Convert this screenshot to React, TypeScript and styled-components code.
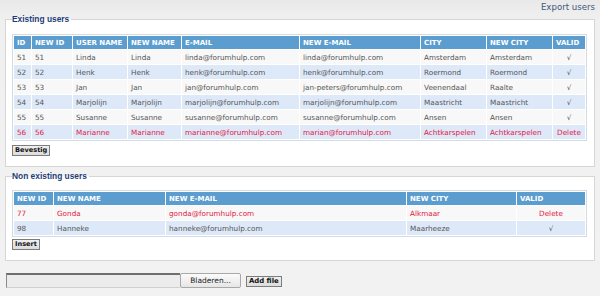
import React, { FC } from 'react';
import styled, { createGlobalStyle, css } from 'styled-components';

const GlobalStyle = createGlobalStyle`
  html, body {
    margin: 0;
    padding: 0;
    background: #f0f0f0;
    font-family: 'DejaVu Sans', Verdana, sans-serif;
  }
`;

interface Column {
  label: string;
  width: number;
  center?: boolean;
}

interface UserRow {
  cells: string[];
  danger?: boolean;
}

const existingColumns: Column[] = [
  { label: 'ID', width: 17 },
  { label: 'NEW ID', width: 40 },
  { label: 'USER NAME', width: 54 },
  { label: 'NEW NAME', width: 53 },
  { label: 'E-MAIL', width: 117 },
  { label: 'NEW E-MAIL', width: 120 },
  { label: 'CITY', width: 65 },
  { label: 'NEW CITY', width: 65 },
  { label: 'VALID', width: 32, center: true },
];

const existingRows: UserRow[] = [
  { cells: ['51', '51', 'Linda', 'Linda', 'linda@forumhulp.com', 'linda@forumhulp.com', 'Amsterdam', 'Amsterdam', '√'] },
  { cells: ['52', '52', 'Henk', 'Henk', 'henk@forumhulp.com', 'henk@forumhulp.com', 'Roermond', 'Roermond', '√'] },
  { cells: ['53', '53', 'Jan', 'Jan', 'jan@forumhulp.com', 'jan-peters@forumhulp.com', 'Veenendaal', 'Raalte', '√'] },
  { cells: ['54', '54', 'Marjolijn', 'Marjolijn', 'marjolijn@forumhulp.com', 'marjolijn@forumhulp.com', 'Maastricht', 'Maastricht', '√'] },
  { cells: ['55', '55', 'Susanne', 'Susanne', 'susanne@forumhulp.com', 'susanne@forumhulp.com', 'Ansen', 'Ansen', '√'] },
  {
    cells: ['56', '56', 'Marianne', 'Marianne', 'marianne@forumhulp.com', 'marian@forumhulp.com', 'Achtkarspelen', 'Achtkarspelen', 'Delete'],
    danger: true,
  },
];

const newColumns: Column[] = [
  { label: 'NEW ID', width: 39 },
  { label: 'NEW NAME', width: 111 },
  { label: 'NEW E-MAIL', width: 240 },
  { label: 'NEW CITY', width: 109 },
  { label: 'VALID', width: 68, center: true },
];

const newRows: UserRow[] = [
  { cells: ['77', 'Gonda', 'gonda@forumhulp.com', 'Alkmaar', 'Delete'], danger: true },
  { cells: ['98', 'Hanneke', 'hanneke@forumhulp.com', 'Maarheeze', '√'] },
];

const UserTable: FC<{ columns: Column[]; rows: UserRow[] }> = ({ columns, rows }) => (
  <Table>
    <colgroup>
      {columns.map((c) => (
        <col key={c.label} style={{ width: c.width }} />
      ))}
    </colgroup>
    <thead>
      <tr>
        {columns.map((c) => (
          <HeadCell key={c.label}>{c.label}</HeadCell>
        ))}
      </tr>
    </thead>
    <tbody>
      {rows.map((row, i) => (
        <BodyRow key={i} $even={i % 2 === 1} $danger={row.danger}>
          {row.cells.map((cell, j) => (
            <BodyCell key={j} $center={columns[j].center}>
              {cell}
            </BodyCell>
          ))}
        </BodyRow>
      ))}
    </tbody>
  </Table>
);

const App: FC = () => (
  <>
    <GlobalStyle />
    <Page>
      <TopBar>
        <ExportLink>Export users</ExportLink>
      </TopBar>

      <Section>
        <Legend>Existing users</Legend>
        <UserTable columns={existingColumns} rows={existingRows} />
        <SmallButton $gap={4}>Bevestig</SmallButton>
      </Section>

      <Section>
        <Legend>Non existing users</Legend>
        <UserTable columns={newColumns} rows={newRows} />
        <SmallButton $gap={2}>Insert</SmallButton>
      </Section>

      <UploadRow>
        <FileField>
          <FileText />
          <BrowseButton>Bladeren...</BrowseButton>
        </FileField>
        <SmallButton $gap={2}>Add file</SmallButton>
      </UploadRow>
    </Page>
  </>
);

const Page = styled.div`
  width: 600px;
  height: 296px;
  box-sizing: border-box;
  padding: 0 5px 0 5px;
  background: linear-gradient(#e9e9e9, #f0f0f0 20px, #f2f2f2);
  overflow: hidden;
`;

const TopBar = styled.div`
  display: flex;
  justify-content: flex-end;
  height: 14px;
  align-items: center;
`;

const ExportLink = styled.a`
  font-size: 8.6px;
  line-height: 10px;
  color: #3b5878;
  cursor: pointer;
  margin-top: -1px;
`;

const Section = styled.fieldset`
  margin: 0 0 4px 0;
  padding: 9px 7px 10px 6px;
  border: 1px solid #d6d6d6;
  background: #ffffff;
  min-width: 0;

  & + & {
    padding-top: 8px;
  }
`;

const Legend = styled.legend`
  font-family: 'Liberation Sans', Arial, sans-serif;
  font-weight: bold;
  font-size: 8.4px;
  line-height: 11px;
  color: #1f3d78;
  padding: 0 2px 0 0;
  margin-left: 0;
`;

const Table = styled.table`
  table-layout: fixed;
  border-collapse: separate;
  border-spacing: 1px;
  border: 1px solid #d3dbe4;
  background: #ffffff;
  width: 575px;
`;

const HeadCell = styled.th`
  height: 13px;
  padding: 0 3px;
  background: #5b9dcf;
  color: #ffffff;
  font-size: 7px;
  font-weight: bold;
  text-align: left;
  white-space: nowrap;
  overflow: hidden;
`;

const BodyRow = styled.tr<{ $even?: boolean; $danger?: boolean }>(
  (p) => css`
    background: ${p.$even ? '#dde9f9' : '#f8f8f8'};
    color: ${p.$danger ? '#e2183f' : '#555555'};
  `,
);

const BodyCell = styled.td<{ $center?: boolean }>`
  height: 14px;
  padding: 0 3px;
  font-size: 7.25px;
  white-space: nowrap;
  overflow: hidden;
  text-align: ${(p) => (p.$center ? 'center' : 'left')};
`;

const SmallButton = styled.button<{ $gap: number }>`
  display: block;
  margin-top: ${(p) => p.$gap}px;
  height: 11px;
  padding: 0 2px;
  font-family: 'DejaVu Sans', Verdana, sans-serif;
  font-size: 6.6px;
  font-weight: bold;
  line-height: 9px;
  color: #111111;
  background: linear-gradient(#f0f0f0, #dcdcdc);
  border: 1px solid #7d7d7d;
  border-radius: 0;
  cursor: pointer;
`;

const UploadRow = styled.div`
  display: flex;
  align-items: center;
  gap: 5px;
  margin-top: 12px;
  padding-left: 1px;

  ${SmallButton} {
    font-size: 6.9px;
  }
`;

const FileField = styled.div`
  display: flex;
  height: 15px;
`;

const FileText = styled.div`
  width: 173px;
  background: #ececec;
  border-top: 2px solid #6f6f6f;
  border-left: 1px solid #8a8a8a;
  border-bottom: 1px solid #d0d0d0;
  box-sizing: content-box;
  height: 12px;
`;

const BrowseButton = styled.button`
  width: 61px;
  height: 15px;
  padding: 0;
  font-family: 'DejaVu Sans', Verdana, sans-serif;
  font-size: 7.5px;
  color: #222222;
  background: linear-gradient(#fbfbfb, #e6e6e6);
  border: 1px solid #a8a8a8;
  border-radius: 2px;
`;

export default App;
